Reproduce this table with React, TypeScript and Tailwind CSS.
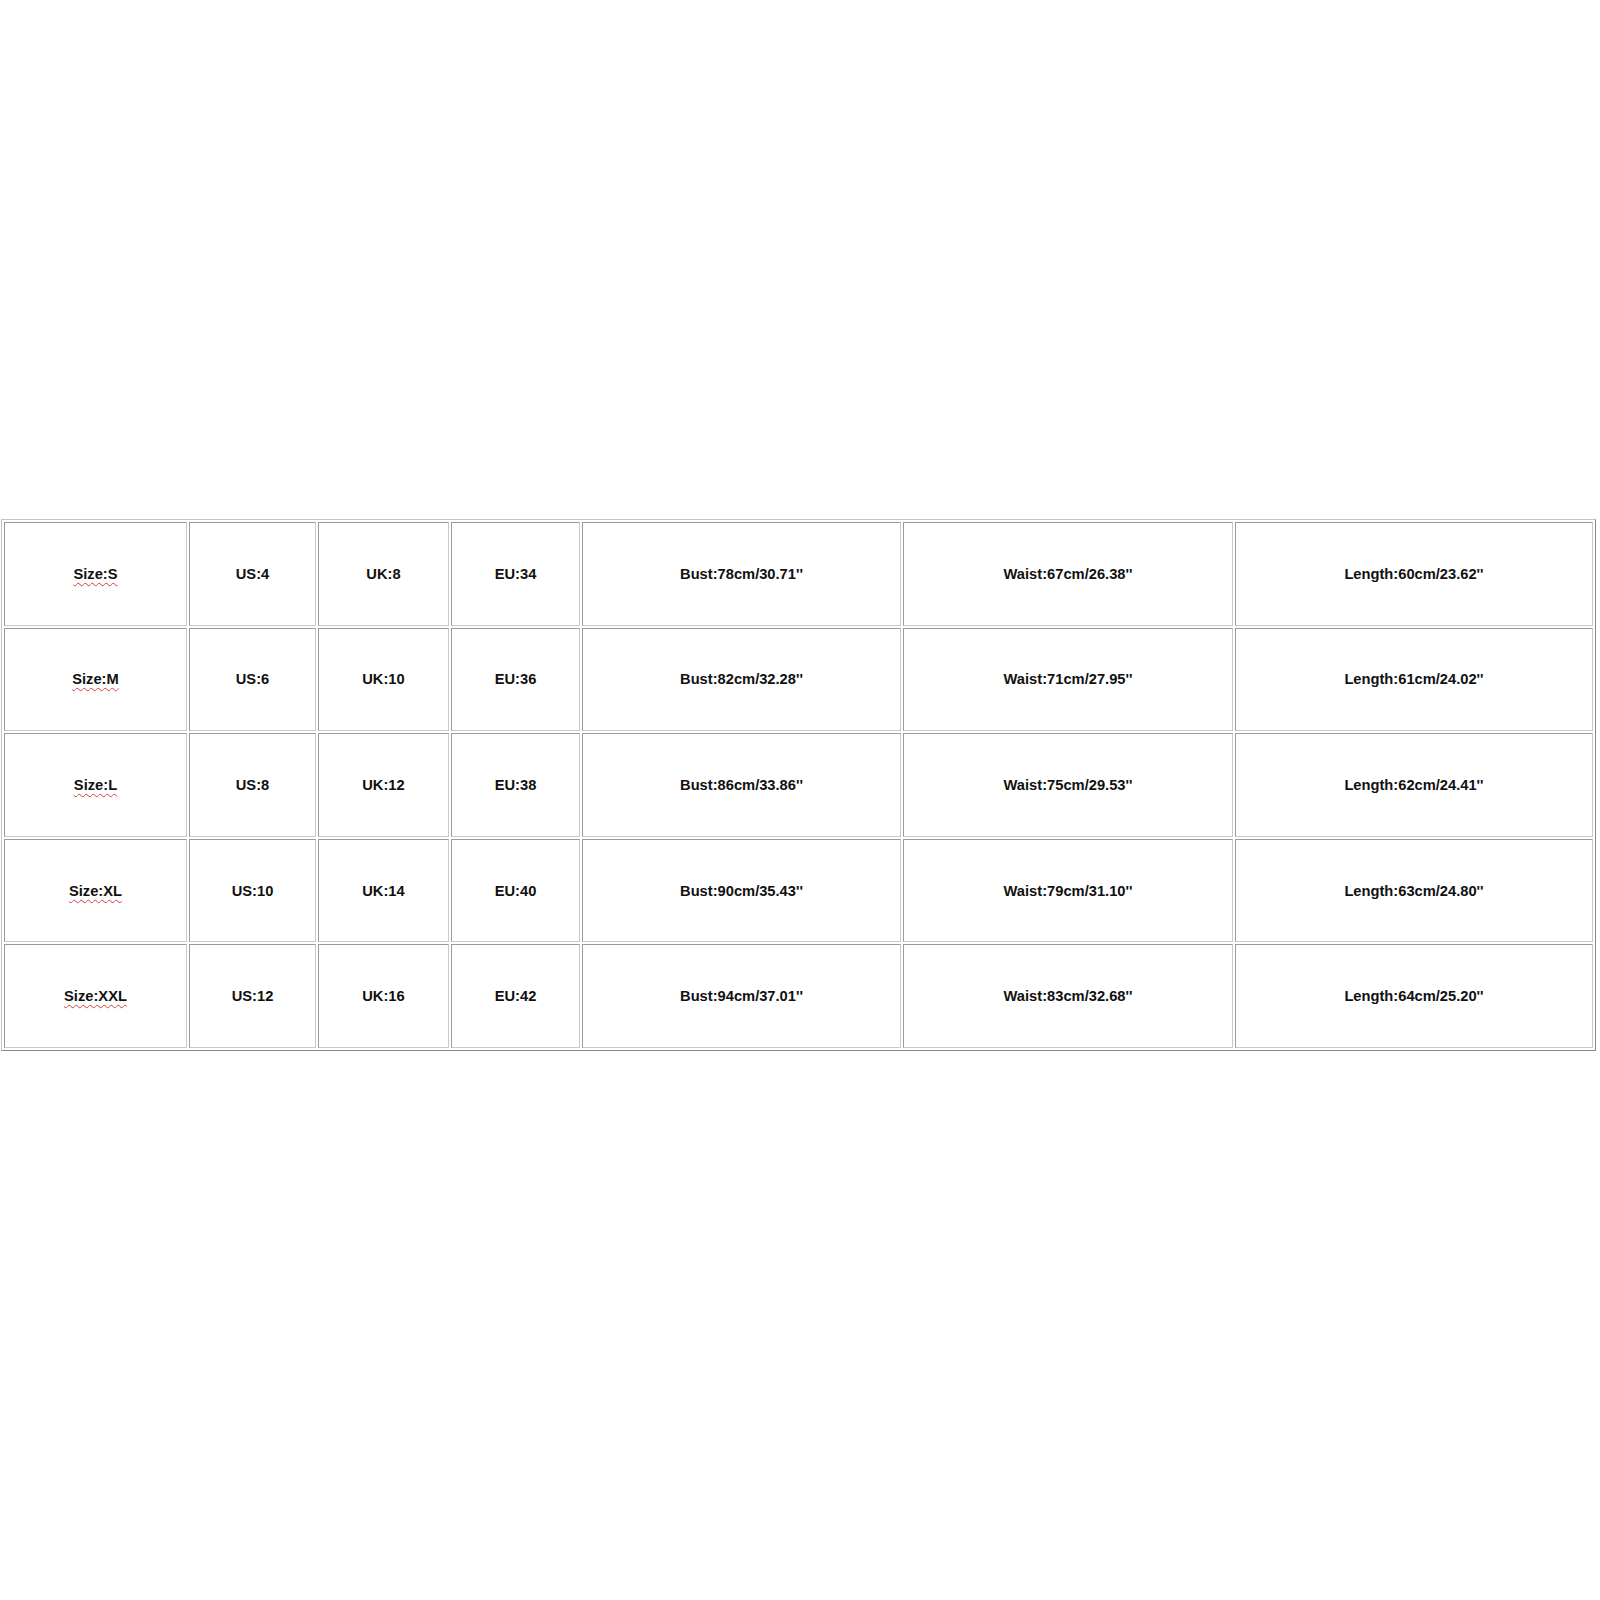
import React from "react";

const rows = [
  ["Size:S", "US:4", "UK:8", "EU:34", "Bust:78cm/30.71''", "Waist:67cm/26.38''", "Length:60cm/23.62''"],
  ["Size:M", "US:6", "UK:10", "EU:36", "Bust:82cm/32.28''", "Waist:71cm/27.95''", "Length:61cm/24.02''"],
  ["Size:L", "US:8", "UK:12", "EU:38", "Bust:86cm/33.86''", "Waist:75cm/29.53''", "Length:62cm/24.41''"],
  ["Size:XL", "US:10", "UK:14", "EU:40", "Bust:90cm/35.43''", "Waist:79cm/31.10''", "Length:63cm/24.80''"],
  ["Size:XXL", "US:12", "UK:16", "EU:42", "Bust:94cm/37.01''", "Waist:83cm/32.68''", "Length:64cm/25.20''"],
];

export default function App() {
  return (
    <div className="w-[1600px] h-[1600px] bg-white pt-[519px] pl-[1px]" style={{ fontFamily: '"Liberation Sans", Arial, sans-serif' }}>
      <div className="w-[1595px] border border-t-[#c4c4c4] border-l-[#c4c4c4] border-r-[#8a8a8a] border-b-[#8a8a8a] p-[2px]">
        <div className="grid grid-cols-[183px_127px_131px_129px_319px_330px_358px] grid-rows-5 gap-[2px] h-[526px]">
          {rows.map((r, i) =>
            r.map((c, j) => (
              <div
                key={`${i}-${j}`}
                className="flex items-center justify-center border border-t-[#9a9a9a] border-l-[#9a9a9a] border-r-[#c8c8c8] border-b-[#c8c8c8] text-[14.7px] font-bold text-[#111]"
              >
                {j === 0 ? (
                  <span className="underline decoration-wavy decoration-[#d04040] decoration-1 underline-offset-[3px]">{c}</span>
                ) : (
                  <span>{c}</span>
                )}
              </div>
            ))
          )}
        </div>
      </div>
    </div>
  );
}
